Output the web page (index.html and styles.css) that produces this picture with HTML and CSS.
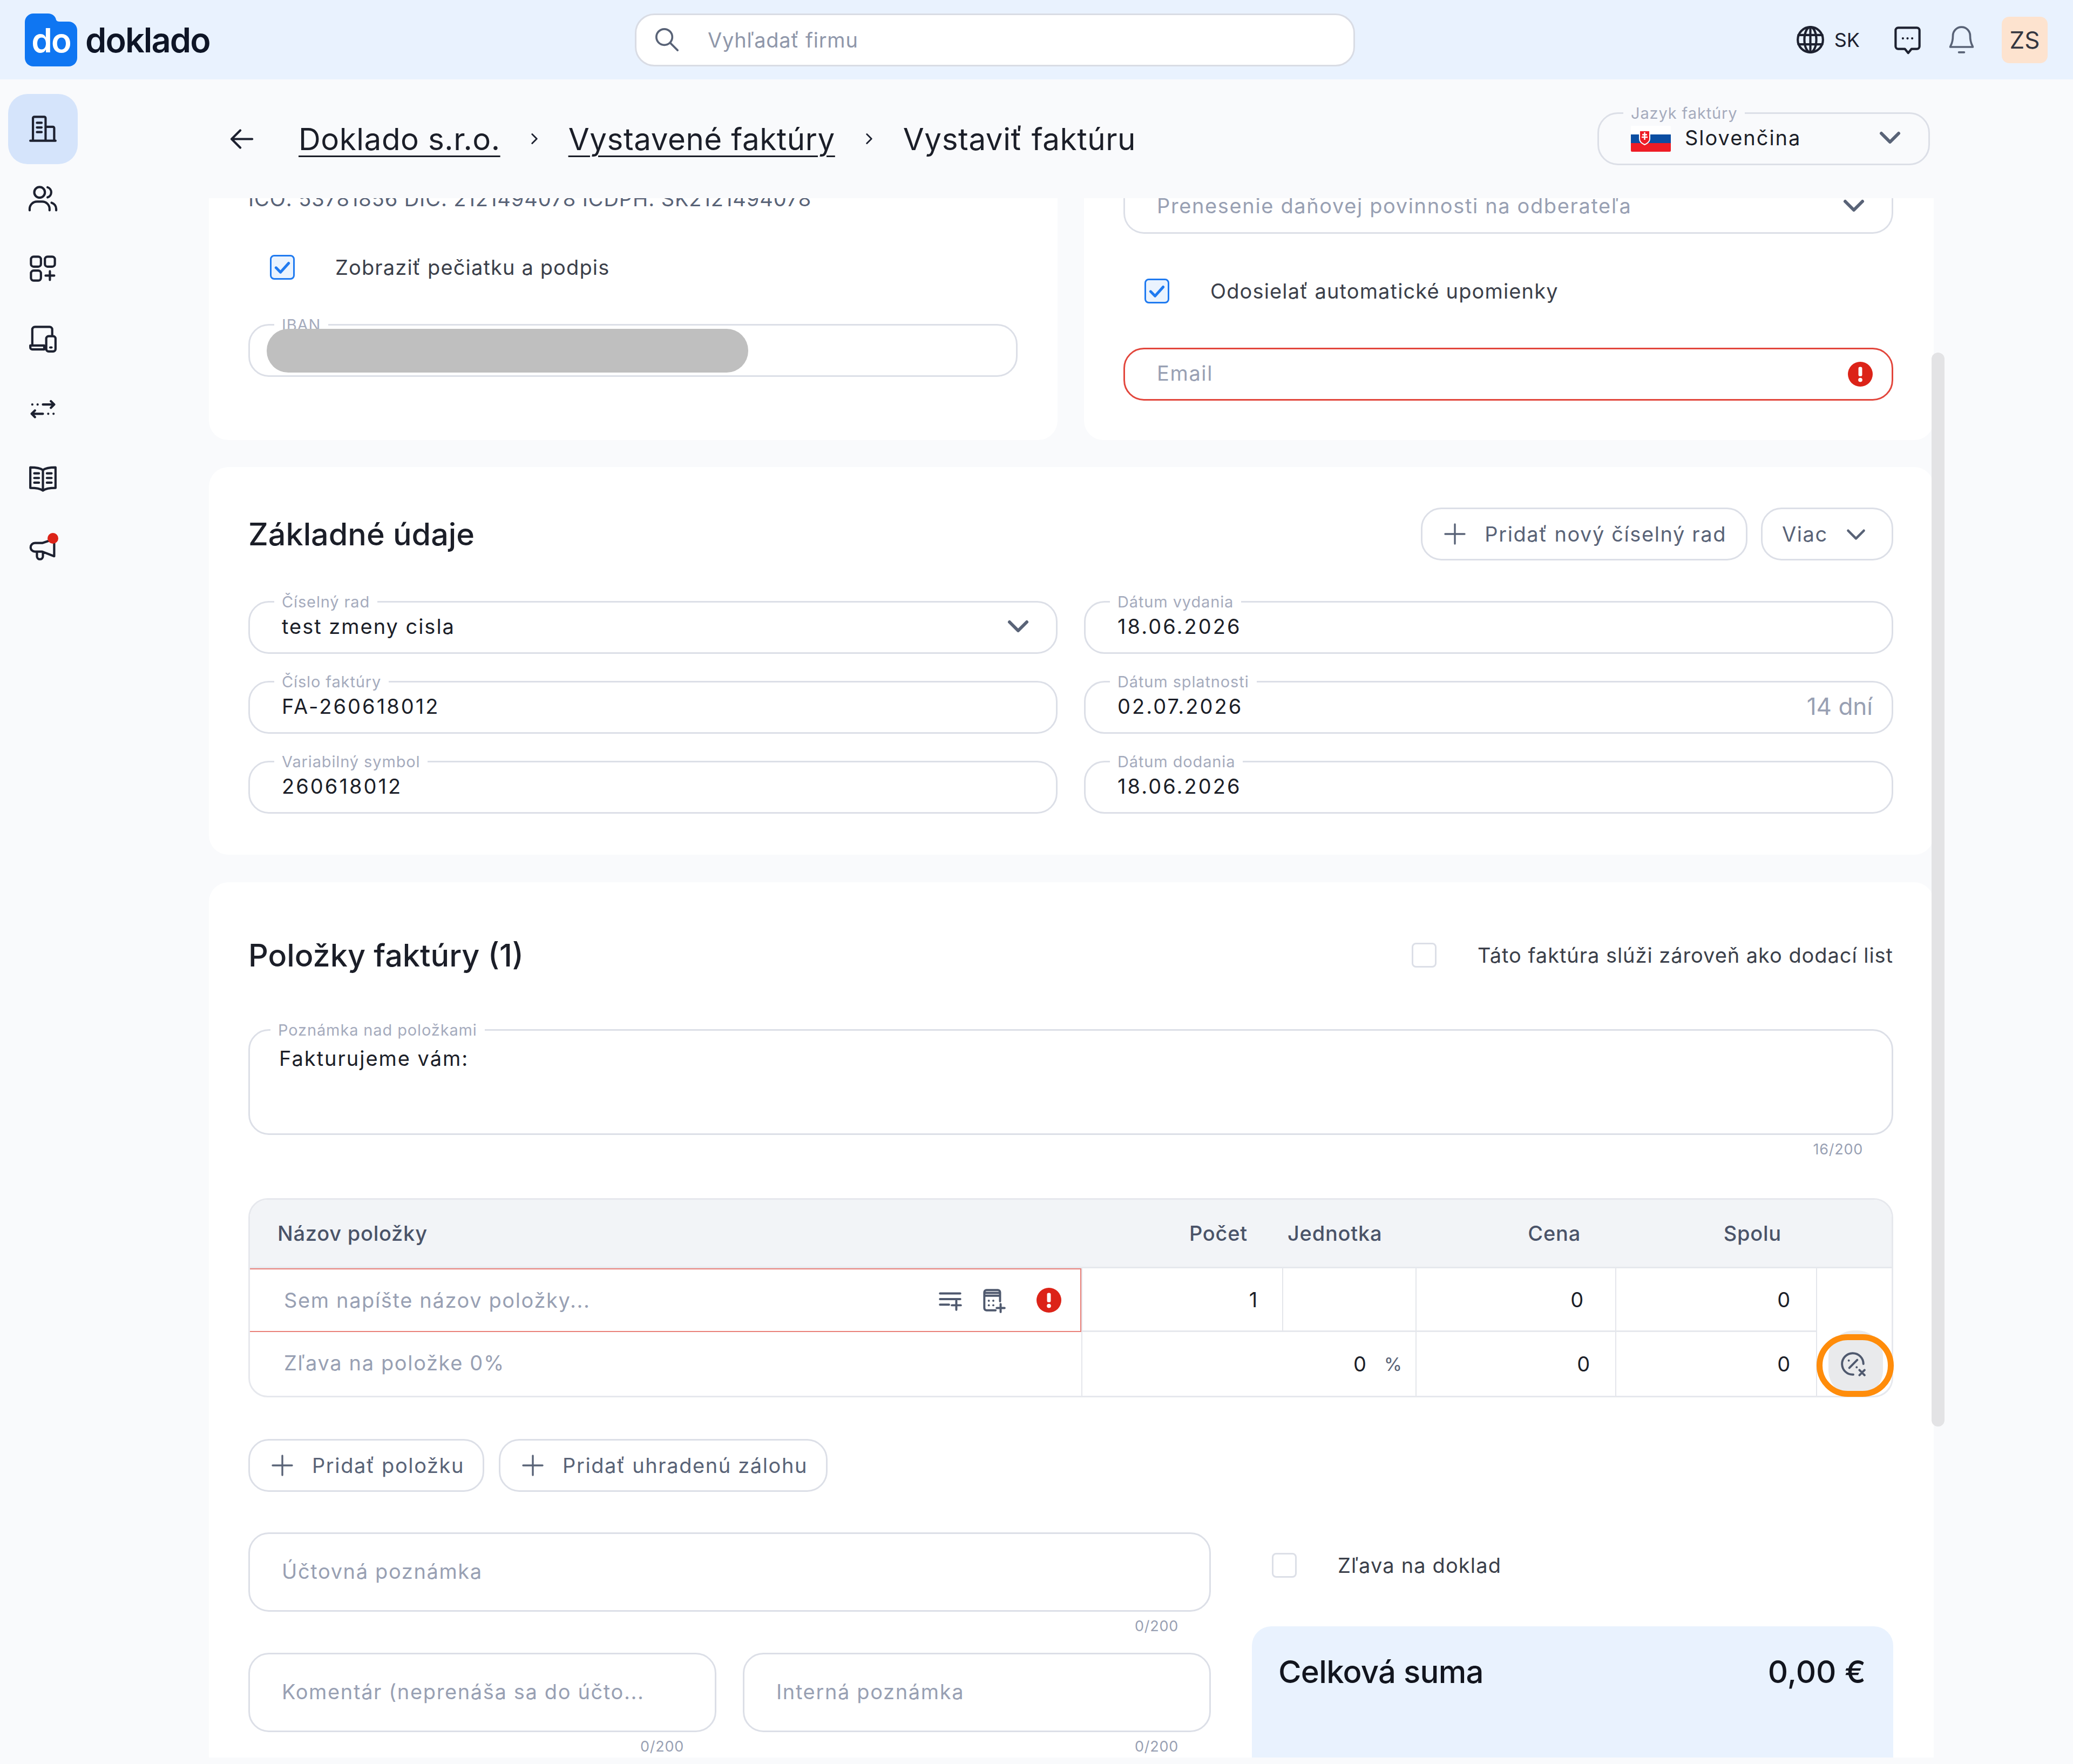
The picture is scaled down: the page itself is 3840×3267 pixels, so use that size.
FILE: index.html
```html
<!DOCTYPE html>
<html lang="sk">
<head>
    <meta charset="UTF-8">
    <title>Doklado - Vystaviť faktúru</title>
    <link rel="stylesheet" href="styles.css">
</head>
<body>
    <header class="topbar">
        <div class="logo">
            <svg class="logo-mark" viewBox="0 0 97 98"><path d="M16 0h27c8 0 14 5 15 12 1 2 3 3 6 3h17c9 0 16 7 16 16v51c0 9-7 16-16 16H16C7 98 0 91 0 82V16C0 7 7 0 16 0z" fill="#0f76f2"/></svg>
            <span class="logo-do">do</span>
            <span class="logo-text">doklado</span>
        </div>
        <div class="search">
            <svg class="ico" viewBox="0 0 24 24"><circle cx="10" cy="10" r="6"/><path d="M14.5 14.5L20 20"/></svg>
            <span>Vyhľadať firmu</span>
        </div>
        <div class="top-actions">
            <svg class="ico dark" viewBox="0 0 24 24"><circle cx="12" cy="12" r="9.5"/><ellipse cx="12" cy="12" rx="4.5" ry="9.5"/><path d="M12 2.500v19M3 8.500h18M3 15.500h18"/></svg>
            <span class="lang">SK</span>
            <svg class="ico dark chat" viewBox="0 0 24 24"><path d="M5 3h14a2 2 0 0 1 2 2v12a2 2 0 0 1-2 2h-4l-2.500 3-2.500-3H5a2 2 0 0 1-2-2V5a2 2 0 0 1 2-2z"/><path d="M8.500 11h.01M12 11h.01M15.500 11h.01"/></svg>
            <svg class="ico bell" viewBox="0 0 24 24"><path d="M12 2.500a6.500 6.500 0 0 0-6.500 6.500c0 6-2 7.500-2 8.500h17c0-1-2-2.500-2-8.500A6.500 6.500 0 0 0 12 2.500z"/><path d="M10 21.500h4"/></svg>
            <div class="avatar">ZS</div>
        </div>
    </header>

    <div class="app">
        <nav class="sidebar">
            <a class="nav-item active"><svg class="ico dark" viewBox="0 0 24 24"><path d="M2.500 21h19M4.500 21V4a1 1 0 0 1 1-1h7.500a1 1 0 0 1 1 1v17M14 10.500h5.500a1 1 0 0 1 1 1V21M7.500 7.500h3.500M7.500 11h3.500M7.500 14.500h3.500"/></svg></a>
            <a class="nav-item"><svg class="ico dark" viewBox="0 0 24 24"><circle cx="9.500" cy="7" r="4"/><path d="M2 20.500v-1a5.500 5.500 0 0 1 5.500-5.500h4a5.500 5.500 0 0 1 5.500 5.500v1M15.500 3.200a4 4 0 0 1 0 7.600M22 20.500v-1a5 5 0 0 0-3.500-4.700"/></svg></a>
            <a class="nav-item"><svg class="ico dark" viewBox="0 0 24 24"><rect x="3" y="3" width="7.500" height="7.500" rx="2"/><rect x="13.500" y="3" width="7.500" height="7.500" rx="2"/><rect x="3" y="13.500" width="7.500" height="7.500" rx="2"/><path d="M17.250 14v6.500M14 17.250h6.500"/></svg></a>
            <a class="nav-item"><svg class="ico dark" viewBox="0 0 24 24"><path d="M4 16V5a2 2 0 0 1 2-2h11a2 2 0 0 1 2 2v4M2.500 17H13v3H4a1.500 1.500 0 0 1-1.500-1.500z"/><rect x="14.500" y="10" width="7" height="11.500" rx="1.800"/><path d="M17.500 18.500h1"/></svg></a>
            <a class="nav-item"><svg class="ico dark" viewBox="0 0 24 24"><path d="M12 9h8.500M18 6.500l2.500 2.500-2.500 2.500M12 16H3.500M6 13.500L3.500 16 6 18.500"/><path d="M4 9h.01M8 9h.01M20 16h.01M16 16h.01"/></svg></a>
            <a class="nav-item"><svg class="ico dark" viewBox="0 0 24 24"><path d="M12 5.500C10 4 7 3.500 2.500 3.500v15.500c4.500 0 7.500.5 9.500 2 2-1.500 5-2 9.500-2V3.500C17 3.500 14 4 12 5.500zM12 5.500V21M5.500 8h3.500M5.500 11.500h3.500M5.500 15h3.500M15 8h3.500M15 11.500h3.500M15 15h3.500"/></svg></a>
            <a class="nav-item"><svg class="ico dark" viewBox="0 0 24 24"><path d="M20.500 5v13l-9-3.500H6a3.250 3.250 0 0 1 0-6.500h5.500zM7.500 14.500v3.500a2.250 2.250 0 0 0 4.500 0v-3.200"/></svg><i class="nav-dot"></i></a>
        </nav>

        <main class="main">
            <div class="page-head">
                <svg class="ico dark" viewBox="0 0 24 24"><path d="M20 12H5M11 5.500L4.500 12l6.500 6.500"/></svg>
                <a class="crumb link">Doklado s.r.o.</a>
                <svg class="ico dark sep" viewBox="0 0 24 24"><path d="M9 6l6 6-6 6"/></svg>
                <a class="crumb link">Vystavené faktúry</a>
                <svg class="ico dark sep" viewBox="0 0 24 24"><path d="M9 6l6 6-6 6"/></svg>
                <span class="crumb">Vystaviť faktúru</span>
                <div class="field lang-select">
                    <label>Jazyk faktúry</label>
                    <svg class="flag" viewBox="0 0 74 48"><rect width="74" height="16" fill="#fff"/><rect y="16" width="74" height="16" fill="#0b4ea2"/><rect y="32" width="74" height="16" fill="#ee1c25"/><path d="M16 9h19v15c0 6-5 9-9.500 11C21 33 16 30 16 24z" fill="#ee1c25" stroke="#fff" stroke-width="2"/><path d="M25.500 12v14M21 16.500h9M20 21h11" stroke="#fff" stroke-width="2.500"/></svg>
                    <span class="value">Slovenčina</span>
                    <svg class="chev" viewBox="0 0 24 24"><path d="M4 8l8 8 8-8"/></svg>
                </div>
            </div>

            <div class="scroll">
                <div class="scroll-inner">
                    <div class="top-row">
                        <section class="card card-issuer">
                            <p class="issuer-ids">IČO: 53781856 DIČ: 2121494078 IČDPH: SK2121494078</p>
                            <div class="check-row">
                                <span class="check on"><svg viewBox="0 0 24 24"><path d="M5 12.500l5 5 9-10"/></svg></span>
                                <span>Zobraziť pečiatku a podpis</span>
                            </div>
                            <div class="field">
                                <label>IBAN</label>
                                <div class="redacted"></div>
                            </div>
                        </section>
                        <section class="card card-tax">
                            <div class="field tax-select">
                                <span class="placeholder">Prenesenie daňovej povinnosti na odberateľa</span>
                                <svg class="chev" viewBox="0 0 24 24"><path d="M4 8l8 8 8-8"/></svg>
                            </div>
                            <div class="check-row">
                                <span class="check on"><svg viewBox="0 0 24 24"><path d="M5 12.500l5 5 9-10"/></svg></span>
                                <span>Odosielať automatické upomienky</span>
                            </div>
                            <div class="field invalid">
                                <span class="placeholder">Email</span>
                                <svg class="alert" viewBox="0 0 24 24"><circle cx="12" cy="12" r="12"/><rect x="10.200" y="5" width="3.600" height="9" rx="1.500"/><circle cx="12" cy="17.500" r="2"/></svg>
                            </div>
                        </section>
                    </div>

                    <section class="card card-basic">
                        <div class="card-head">
                            <h2>Základné údaje</h2>
                            <div class="head-actions">
                                <button class="btn"><svg class="ico" viewBox="0 0 24 24"><path d="M12 4v16M4 12h16"/></svg>Pridať nový číselný rad</button>
                                <button class="btn btn-more">Viac<svg class="chev small" viewBox="0 0 24 24"><path d="M5 9l7 7 7-7"/></svg></button>
                            </div>
                        </div>
                        <div class="basic-grid">
                            <div class="field"><label>Číselný rad</label><span class="value">test zmeny cisla</span><svg class="chev" viewBox="0 0 24 24"><path d="M4 8l8 8 8-8"/></svg></div>
                            <div class="field"><label>Dátum vydania</label><span class="value digits">18.06.2026</span></div>
                            <div class="field"><label>Číslo faktúry</label><span class="value digits">FA-260618012</span></div>
                            <div class="field"><label>Dátum splatnosti</label><span class="value digits">02.07.2026</span><span class="days">14 dní</span></div>
                            <div class="field"><label>Variabilný symbol</label><span class="value digits">260618012</span></div>
                            <div class="field"><label>Dátum dodania</label><span class="value digits">18.06.2026</span></div>
                        </div>
                    </section>

                    <section class="card card-items">
                        <div class="card-head">
                            <h2>Položky faktúry (1)</h2>
                            <div class="check-row delivery">
                                <span class="check"></span>
                                <span>Táto faktúra slúži zároveň ako dodací list</span>
                            </div>
                        </div>
                        <div class="field note">
                            <label>Poznámka nad položkami</label>
                            <span class="value">Fakturujeme vám:</span>
                        </div>
                        <div class="counter note-counter">16/200</div>

                        <div class="items">
                            <div class="items-head">
                                <div>Názov položky</div>
                                <div class="num">Počet</div>
                                <div class="unit-head">Jednotka</div>
                                <div class="num">Cena</div>
                                <div class="num">Spolu</div>
                                <div></div>
                            </div>
                            <div class="items-row">
                                <div class="cell name invalid-cell">
                                    <span class="placeholder">Sem napíšte názov položky...</span>
                                    <svg class="ico grey" viewBox="0 0 24 24"><path d="M3 6h18M3 11h18M3 16h8M17.500 12.500v8M13.500 16.500h8"/></svg>
                                    <svg class="ico grey" viewBox="0 0 24 24"><path d="M14 21H6a2 2 0 0 1-2-2V5a2 2 0 0 1 2-2h10a2 2 0 0 1 2 2v8M4 8h14M4 5.500h14M8 12.500h.01M12 12.500h.01M8 16.500h.01M12 16.500h.01M18.500 15.500v7M15 19h7"/></svg>
                                    <svg class="alert" viewBox="0 0 24 24"><circle cx="12" cy="12" r="12"/><rect x="10.200" y="5" width="3.600" height="9" rx="1.500"/><circle cx="12" cy="17.500" r="2"/></svg>
                                </div>
                                <div class="cell qty">1</div>
                                <div class="cell"></div>
                                <div class="cell price">0</div>
                                <div class="cell total">0</div>
                                <div class="cell last"></div>
                            </div>
                            <div class="items-row lower">
                                <div class="cell name"><span class="placeholder">Zľava na položke 0%</span></div>
                                <div class="cell discount"><span>0</span><span class="pct">%</span></div>
                                <div class="cell price2">0</div>
                                <div class="cell total">0</div>
                                <div class="cell last">
                                    <div class="discount-fill"></div>
                                    <div class="discount-ring">
                                        <svg class="ico grey" viewBox="0 0 24 24"><path d="M21 12A9.500 9.500 0 1 0 12 21.500"/><path d="M8.500 15.500l7-7M8 9h.01M15 15h.01M17.500 17.500l4.500 4.500M22 17.500L17.500 22"/></svg>
                                    </div>
                                </div>
                            </div>
                        </div>

                        <div class="item-actions">
                            <button class="btn"><svg class="ico" viewBox="0 0 24 24"><path d="M12 4v16M4 12h16"/></svg>Pridať položku</button>
                            <button class="btn"><svg class="ico" viewBox="0 0 24 24"><path d="M12 4v16M4 12h16"/></svg>Pridať uhradenú zálohu</button>
                        </div>

                        <div class="bottom-grid">
                            <div class="notes">
                                <div class="note-wide">
                                    <div class="field tall"><span class="placeholder">Účtovná poznámka</span></div>
                                    <div class="counter">0/200</div>
                                </div>
                                <div>
                                    <div class="field tall"><span class="placeholder">Komentár (neprenáša sa do účto...</span></div>
                                    <div class="counter">0/200</div>
                                </div>
                                <div>
                                    <div class="field tall"><span class="placeholder">Interná poznámka</span></div>
                                    <div class="counter">0/200</div>
                                </div>
                            </div>
                            <div class="summary">
                                <div class="check-row doc-discount">
                                    <span class="check"></span>
                                    <span>Zľava na doklad</span>
                                </div>
                                <div class="sum-box">
                                    <span class="sum-label">Celková suma</span>
                                    <span>0,00 €</span>
                                </div>
                            </div>
                        </div>
                    </section>
                </div>
                <div class="scroll-thumb"></div>
            </div>
        </main>
    </div>
</body>
</html>
```

FILE: styles.css
```css
* { box-sizing: border-box; }
html, body { margin: 0; padding: 0; }
body { width: 3840px; height: 3267px; overflow: hidden; background: #f9fafc; color: #1b1e28; font-family: Inter, "Noto Sans", sans-serif; font-size: 38px; letter-spacing: 0.02em; }
button { font: inherit; letter-spacing: inherit; }
h2 { margin: 0; font-size: 57.5px; font-weight: 500; letter-spacing: 0; }

.ico { width: 59px; height: 59px; flex: none; fill: none; stroke: #596377; stroke-width: 1.5; stroke-linecap: round; stroke-linejoin: round; }
.ico.dark { stroke: #1d2130; stroke-width: 1.7; }
.ico.grey { width: 50px; height: 50px; stroke: #4f596e; stroke-width: 1.9; }
.chev { width: 48px; height: 48px; flex: none; margin: 0 11px 0 auto; fill: none; stroke: #596377; stroke-width: 3; stroke-linecap: round; stroke-linejoin: round; }
.chev.small { width: 50px; height: 50px; margin: 0 0 0 27px; stroke-width: 2.2; }
.alert { width: 46px; height: 46px; flex: none; margin-left: auto; fill: #fff; }
.alert > circle:first-child { fill: #dc2318; }

/* top bar */
.topbar { height: 147px; background: #e9f2fe; display: flex; align-items: center; padding: 0 47px 0 46px; }
.logo { position: relative; display: flex; align-items: center; width: 1130px; }
.logo-mark { width: 97px; height: 98px; }
.logo-do { position: absolute; left: 0; width: 97px; top: 12px; text-align: center; color: #fff; font-size: 62px; font-weight: 600; letter-spacing: -0.03em; }
.logo-text { margin-left: 15px; font-size: 63px; font-weight: 600; letter-spacing: -0.03em; color: #0e1526; }
.search { width: 1334px; height: 98px; border: 3px solid #d9dce4; border-radius: 36px; background: #fff; display: flex; align-items: center; padding: 0 40px 0 27px; gap: 46px; color: #8f97aa; }
.top-actions { margin-left: auto; display: flex; align-items: center; }
.lang { margin-left: 15px; color: #1d2130; font-size: 36px; letter-spacing: 0; }
.chat { margin-left: 59px; }
.bell { margin-left: 41px; }
.avatar { width: 85px; height: 86px; margin-left: 45px; border-radius: 14px; background: #fde3cf; display: flex; align-items: center; justify-content: center; font-size: 44px; color: #33363f; letter-spacing: 0; }

.app { display: flex; }
.sidebar { width: 147px; flex: none; display: flex; flex-direction: column; padding: 27px 0 0 15px; }
.nav-item { position: relative; width: 129px; height: 129.500px; border-radius: 36px; display: flex; align-items: center; justify-content: center; }
.nav-item.active { background: #d5e4fb; }
.nav-dot { position: absolute; top: 36px; left: 73px; width: 20px; height: 20px; border-radius: 50%; background: #dc2318; }

.main { flex: 1; min-width: 0; }
.page-head { height: 220px; padding: 0 265px 0 271px; display: flex; align-items: center; gap: 76px; }
.page-head .sep { width: 34px; height: 34px; margin: 0 -30px; stroke-width: 2; }
.crumb { font-size: 56.500px; font-weight: 400; letter-spacing: 0.01em; }
.crumb.link { text-decoration: underline; text-underline-offset: 10px; text-decoration-thickness: 3px; }

/* inputs */
.field { position: relative; height: 98px; border: 3px solid #dcdfe7; border-radius: 38px; background: #fff; display: flex; align-items: center; padding: 0 35px 4px 59px; }
.field label { position: absolute; top: -19px; left: 45px; padding: 0 14px; background: #fff; font-size: 29px; line-height: 36px; color: #a5abbd; letter-spacing: 0.03em; }
.placeholder { color: #98a0b3; letter-spacing: 0.043em; }
.value { color: #1b1e28; letter-spacing: 0.052em; }
.value.digits { letter-spacing: 0.08em; }
.days { margin-left: auto; color: #98a0b3; font-size: 44px; letter-spacing: 0; }
.field.invalid { border-color: #e2463c; }
.field.invalid .alert { margin-top: 4px; }
.field.tall { height: 147px; }

.lang-select { width: 616px; margin-left: auto; padding: 0 36px 4px 59px; background: #f9fafc; }
.lang-select label { background: #f9fafc; }
.lang-select .value { margin-left: 26px; }
.flag { width: 74px; height: 48px; flex: none; border-radius: 2px; margin-top: 4px; }

.check-row { display: flex; align-items: center; gap: 76px; color: #3b3f4a; letter-spacing: 0.03em; }
.check { width: 46px; height: 46px; flex: none; border: 3px solid #dcdfe7; border-radius: 8px; background: #fff; display: flex; }
.check.on { border-color: #1f7af0; background: #eaf3fe; }
.check svg { fill: none; stroke: #1f7af0; stroke-width: 3; stroke-linecap: round; stroke-linejoin: round; }

/* scroll area */
.scroll { position: relative; margin-left: 240px; height: 2888px; overflow: hidden; }
.scroll-inner { width: 3195px; }
.scroll-thumb { position: absolute; left: 3191px; top: 286px; width: 24px; height: 1989px; border-radius: 12px; background: #e3e3e5; }
.card { background: #fff; border-radius: 36px; padding: 0 75px 0 73px; }

.top-row { margin-top: -100px; display: grid; grid-template-columns: 1572px 1574px; gap: 49px; }
.card-issuer { height: 548px; padding-top: 76px; }
.issuer-ids { margin: 0; height: 50px; line-height: 50px; color: #596377; white-space: nowrap; letter-spacing: 0.024em; }
.card-issuer .check-row { height: 50px; margin-top: 77px; padding-left: 40px; gap: 75px; }
.card-issuer .field { margin-top: 80px; width: 1425px; padding: 0 35px 0 31px; }
.redacted { position: relative; width: 892px; height: 81px; border-radius: 40px; background: #bfbfbf; }

.card-tax { height: 548px; padding-right: 75px; }
.tax-select { margin-top: 68px; border-top: 0; border-radius: 0 0 38px 38px; height: 98px; padding-left: 59px; }
.card-tax .check-row { height: 50px; margin-top: 81px; padding-left: 39px; }
.card-tax .invalid { margin-top: 80px; }

.card-basic { margin-top: 50px; padding-top: 75px; padding-bottom: 76px; }
.card-head { display: flex; align-items: center; justify-content: space-between; }
.head-actions { display: flex; gap: 25px; }
.btn { height: 98px; padding: 0 36px 0 33px; border: 3px solid #dcdfe7; border-radius: 38px; background: #fff; color: #596377; display: flex; align-items: center; gap: 28px; white-space: nowrap; letter-spacing: 0.042em; }
.btn .ico { width: 54px; height: 54px; }
.btn-more { width: 245px; gap: 0; padding: 0 24px 0 36px; }
.basic-grid { margin-top: 75px; display: grid; grid-template-columns: 1499px 1499px; column-gap: 49px; row-gap: 50px; }

.card-items { margin-top: 51px; padding-top: 100px; height: 1800px; }
.card-items .card-head { height: 70px; }
.delivery { letter-spacing: 0.025em; }
.note { margin-top: 102px; height: 196px; align-items: flex-start; padding: 28px 0 0 54px; }
.note label { left: 38px; }
.counter { height: 54px; line-height: 54px; padding-right: 60px; text-align: right; font-size: 27px; color: #98a0b3; }
.note-counter { padding-right: 56px; }

/* items table */
.items { margin-top: 63px; border: 3px solid #e6e8ed; border-radius: 36px; background: #fff; }
.items-head, .items-row { display: grid; grid-template-columns: 1540px 372px 247px 370px 372px 1fr; }
.items-head { height: 127px; align-items: center; background: #f2f4f7; border-radius: 33px 33px 0 0; border-bottom: 3px solid #e6e8ed; color: #4a5368; font-weight: 500; }
.items-head > div:first-child { padding-left: 51px; }
.items-head .num { text-align: right; padding-right: 64px; }
.items-head .unit-head { padding-left: 10px; }
.cell { height: 118px; border-left: 2px solid #e4e6eb; border-bottom: 3px solid #e6e8ed; display: flex; align-items: center; justify-content: flex-end; padding-right: 47px; }
.cell.name { border-left: 0; justify-content: flex-start; padding: 0 35px 0 63px; }
.invalid-cell { border: 2px solid #e98079; gap: 30px; }
.invalid-cell .placeholder { margin-right: auto; }
.invalid-cell .alert { margin-left: 25px; }
.qty { padding-right: 45px; }
.price { padding-right: 58px; }
.total { padding-right: 47px; }
.lower .cell { border-bottom: 0; }
.lower .name { border-radius: 0 0 0 33px; padding-bottom: 4px; }
.items-row.lower { grid-template-columns: 1540px 619px 370px 372px 1fr; }
.discount { gap: 32px; padding-right: 24px; }
.price2 { padding-right: 46px; }
.pct { color: #596377; font-size: 34px; }
.cell.last { position: relative; padding: 0; border-bottom: 0; }
.discount-fill { position: absolute; top: -3px; left: 21px; width: 101px; bottom: -1px; border-radius: 48px; background: #e9eaec; }
.discount-ring { position: absolute; top: 4px; left: -1px; right: -4px; bottom: -2px; border: 11px solid #ff8c0a; border-radius: 58px; display: flex; align-items: center; justify-content: center; padding: 0 7px 6px 0; }

.item-actions { margin-top: 77px; display: flex; gap: 27px; }
.item-actions .btn { padding-right: 34px; }
.bottom-grid { margin-top: 75px; display: grid; grid-template-columns: 1783px 1188px; column-gap: 76px; }
.notes { display: grid; grid-template-columns: 867px 867px; column-gap: 49px; row-gap: 22px; align-content: start; }
.note-wide { grid-column: span 2; }
.summary { padding-top: 38px; }
.doc-discount { height: 46px; padding-left: 37px; }
.sum-box { margin-top: 90px; height: 400px; padding: 54px 51px 54px 49px; border-radius: 36px; background: #e9f2fe; display: flex; justify-content: space-between; font-size: 58px; font-weight: 500; line-height: 60px; letter-spacing: 0; color: #12151e; }
.sum-label { letter-spacing: -0.012em; }
```
